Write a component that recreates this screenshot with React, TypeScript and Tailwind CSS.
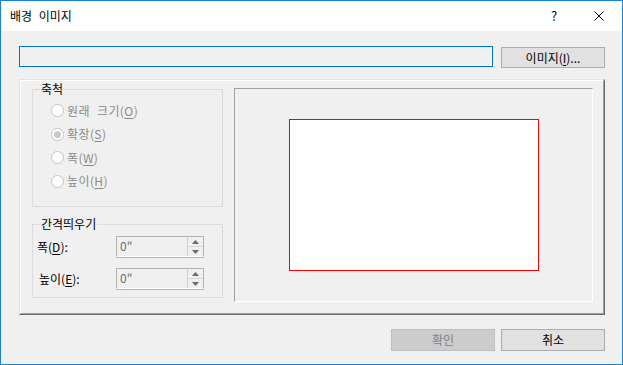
import React from 'react';

const font = { fontFamily: '"Noto Sans CJK KR", "Noto Sans", sans-serif' };

function Radio({ label, mn, checked }: { label: string; mn: string; checked?: boolean }) {
  return (
    <div className="flex items-center h-[23.5px] text-[#8a8a8a]">
      <span className="w-[13px] h-[13px] rounded-full border border-[#c4c4c4] bg-white flex items-center justify-center">
        {checked && <span className="w-[7px] h-[7px] rounded-full bg-[#c8c8c8]" />}
      </span>
      <span className="ml-[3px] tracking-[0.4px]">
        {label}(<span className="underline underline-offset-2">{mn}</span>)
      </span>
    </div>
  );
}

function Spinner() {
  return (
    <div className="flex w-[88px] h-[21px] border border-[#b4b4b4] border-b-white bg-[#f0f0f0] shadow-[0_1px_0_#b4b4b4]">
      <div className="flex-1 pl-[3px] text-[#6d6d6d] leading-[18px]">0"</div>
      <div className="w-[16px] flex flex-col border-l border-[#d0d0d0]">
        <div className="flex-1 flex items-center justify-center border-b border-[#d9d9d9]">
          <svg width="7" height="4" viewBox="0 0 7 4"><path d="M3.5 0L7 4H0z" fill="#6d6d6d" /></svg>
        </div>
        <div className="flex-1 flex items-center justify-center">
          <svg width="7" height="4" viewBox="0 0 7 4"><path d="M0 0h7L3.5 4z" fill="#6d6d6d" /></svg>
        </div>
      </div>
    </div>
  );
}

export default function App() {
  return (
    <div className="w-[623px] h-[365px] border border-[#1883d7] bg-[#f0f0f0] flex flex-col text-[12px] text-black [word-spacing:4px]" style={font}>
      {/* Title bar */}
      <div className="h-[30px] bg-white flex items-center shrink-0">
        <span className="ml-[9px] leading-none">배경 이미지</span>
        <div className="ml-auto flex h-full">
          <div className="w-[46px] flex items-center justify-center text-[13px] pl-[2px]">?</div>
          <div className="w-[46px] flex items-center justify-center">
            <svg width="10" height="10" viewBox="0 0 10 10">
              <path d="M0.5 0.5L9.5 9.5M9.5 0.5L0.5 9.5" stroke="#000" strokeWidth="1" />
            </svg>
          </div>
        </div>
      </div>

      <div className="flex-1 flex flex-col pl-[18px] pr-[17px] pt-[15px] pb-[14px]">
        {/* Path + browse */}
        <div className="flex items-start gap-[8px]">
          <div className="w-[474px] h-[21px] border border-[#0078d7] bg-[#f0f0f0]" />
          <button className="mt-[1px] w-[104px] h-[21px] border border-[#adadad] bg-[#e1e1e1] leading-none">
            이미지(<span className="underline underline-offset-2">I</span>)...
          </button>
        </div>

        {/* Main panel */}
        <div className="mt-[11px] h-[236px] border border-t-[#e3e3e3] border-l-[#e3e3e3] border-r-[#696969] border-b-[#696969]">
          <div className="h-full flex border border-t-white border-l-white border-r-[#a0a0a0] border-b-[#a0a0a0] pl-[11px] pr-[9px] pt-[1px]">
            <div className="w-[191px] flex flex-col">
              <fieldset className="h-[125px] border border-[#dcdcdc] px-[7px]">
                <legend className="px-[1px] leading-[14px]">축척</legend>
                <div className="flex flex-col pl-[11px] pt-[3px]">
                  <Radio label="원래 크기" mn="O" />
                  <Radio label="확장" mn="S" checked />
                  <Radio label="폭" mn="W" />
                  <Radio label="높이" mn="H" />
                </div>
              </fieldset>
              <fieldset className="mt-[10px] h-[81px] border border-[#dcdcdc] px-[7px]">
                <legend className="px-[1px] leading-[14px]">간격띄우기</legend>
                <div className="flex flex-col -ml-[3px] pt-[5px] gap-[11px]">
                  <div className="flex items-center">
                    <span className="w-[79px]">폭(<span className="underline underline-offset-2">D</span>):</span>
                    <Spinner />
                  </div>
                  <div className="flex items-center">
                    <span className="w-[79px] pl-[2px]">높이(<span className="underline underline-offset-2">E</span>):</span>
                    <Spinner />
                  </div>
                </div>
              </fieldset>
            </div>

            {/* Preview */}
            <div className="ml-[11px] mt-[6px] w-[359px] h-[214px] border border-t-[#a0a0a0] border-l-[#a0a0a0] border-r-white border-b-white flex items-center justify-center">
              <div className="w-[250px] h-[152px] bg-white border border-[#ff0000]" />
            </div>
          </div>
        </div>

        {/* Dialog buttons */}
        <div className="mt-[14px] flex justify-end gap-[6px]">
          <button className="w-[104px] h-[22px] border border-[#bfbfbf] bg-[#cccccc] text-[#838383] leading-none">확인</button>
          <button className="w-[104px] h-[22px] border border-[#adadad] bg-[#e1e1e1] leading-none">취소</button>
        </div>
      </div>
    </div>
  );
}
